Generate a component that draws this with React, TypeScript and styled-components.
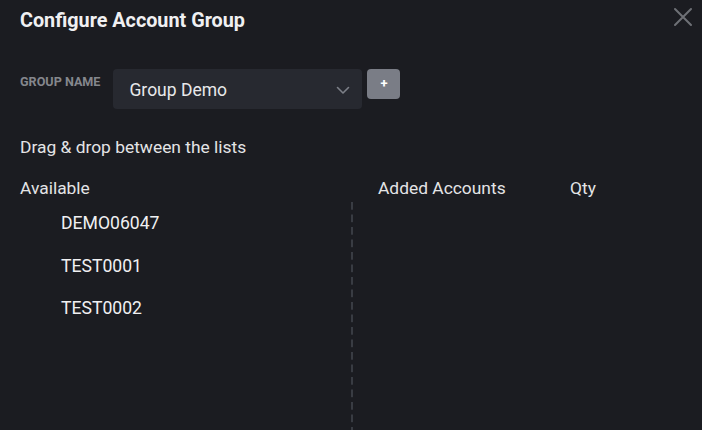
import React, { FC } from "react";
import styled, { createGlobalStyle } from "styled-components";

const GlobalStyle = createGlobalStyle`
  html, body {
    margin: 0;
    padding: 0;
    background: #1b1c21;
  }
  body {
    font-family: Roboto, "Liberation Sans", sans-serif;
    color: #e4e4e6;
  }
`;

const Modal = styled.div`
  width: 702px;
  height: 430px;
  box-sizing: border-box;
  padding: 10px 8px 0 20px;
  background: #1b1c21;
  display: flex;
  flex-direction: column;
  overflow: hidden;
`;

const Header = styled.div`
  display: flex;
  justify-content: space-between;
  align-items: flex-start;
`;

const Title = styled.h2`
  margin: 0;
  font-size: 19.8px;
  line-height: 22px;
  font-weight: 700;
  color: #f0f0f2;
`;

const CloseButton = styled.button`
  border: 0;
  padding: 0;
  margin-top: -4px;
  background: transparent;
  width: 22px;
  height: 22px;
  display: flex;
  align-items: center;
  justify-content: center;
  cursor: pointer;
`;

const GroupRow = styled.div`
  display: flex;
  align-items: flex-start;
  margin-top: 37px;
`;

const Label = styled.label`
  margin-top: 5px;
  font-size: 12.6px;
  line-height: 16px;
  font-weight: 700;
  color: #85878d;
  text-transform: uppercase;
`;

const Select = styled.div`
  margin-left: 13px;
  width: 249px;
  height: 40px;
  box-sizing: border-box;
  padding: 2px 11px 0 16px;
  border-radius: 4px;
  background: #272930;
  display: flex;
  align-items: center;
  justify-content: space-between;
  font-size: 17.5px;
  color: #e8e8ea;
`;

const AddButton = styled.button`
  margin-left: 5px;
  width: 33px;
  height: 30px;
  border: 0;
  border-radius: 4px;
  background: #7a7d86;
  color: #ffffff;
  font-family: inherit;
  font-size: 13px;
  font-weight: 700;
  line-height: 30px;
  padding: 0;
`;

const Hint = styled.p`
  margin: 28px 0 0;
  font-size: 17.4px;
  line-height: 20px;
`;

const Lists = styled.div`
  margin-top: 21px;
  flex: 1;
  display: grid;
  grid-template-columns: 331px 1fr;
  grid-template-rows: 20px 1fr;
  row-gap: 4px;
`;

const ColumnHead = styled.div<{ $pad?: number }>`
  display: flex;
  padding-left: ${(p) => p.$pad ?? 0}px;
  font-size: 17.4px;
  line-height: 20px;
`;

const HeadCell = styled.span<{ $w?: number }>`
  width: ${(p) => (p.$w ? `${p.$w}px` : "auto")};
`;

const AvailableList = styled.ul`
  list-style: none;
  margin: 0;
  padding: 0 0 0 41px;
`;

const AddedList = styled.ul`
  list-style: none;
  margin: 0;
  padding: 0;
  background-image: linear-gradient(#393c43 8px, transparent 8px);
  background-size: 2px 12.5px;
  background-repeat: repeat-y;
  background-position: 0 0;
`;

const Item = styled.li`
  font-size: 17.6px;
  line-height: 42.5px;
  font-weight: 400;
  color: #f0f0f2;
`;

const available = ["DEMO06047", "TEST0001", "TEST0002"];

const App: FC = () => {
  return (
    <>
      <GlobalStyle />
      <Modal>
        <Header>
          <Title>Configure Account Group</Title>
          <CloseButton aria-label="Close">
            <svg width="20" height="20" viewBox="0 0 20 20">
              <path d="M2 2 L18 18 M18 2 L2 18" stroke="#6e7076" strokeWidth="2" strokeLinecap="round" />
            </svg>
          </CloseButton>
        </Header>

        <GroupRow>
          <Label>Group Name</Label>
          <Select>
            <span>Group Demo</span>
            <svg width="16" height="16" viewBox="0 0 16 16">
              <path d="M2.5 5.5 L8 11 L13.5 5.5" fill="none" stroke="#7d8088" strokeWidth="1.6" strokeLinecap="round" strokeLinejoin="round" />
            </svg>
          </Select>
          <AddButton>+</AddButton>
        </GroupRow>

        <Hint>Drag &amp; drop between the lists</Hint>

        <Lists>
          <ColumnHead>Available</ColumnHead>
          <ColumnHead $pad={27}>
            <HeadCell $w={192}>Added Accounts</HeadCell>
            <HeadCell>Qty</HeadCell>
          </ColumnHead>
          <AvailableList>
            {available.map((a) => (
              <Item key={a}>{a}</Item>
            ))}
          </AvailableList>
          <AddedList />
        </Lists>
      </Modal>
    </>
  );
};

export default App;
